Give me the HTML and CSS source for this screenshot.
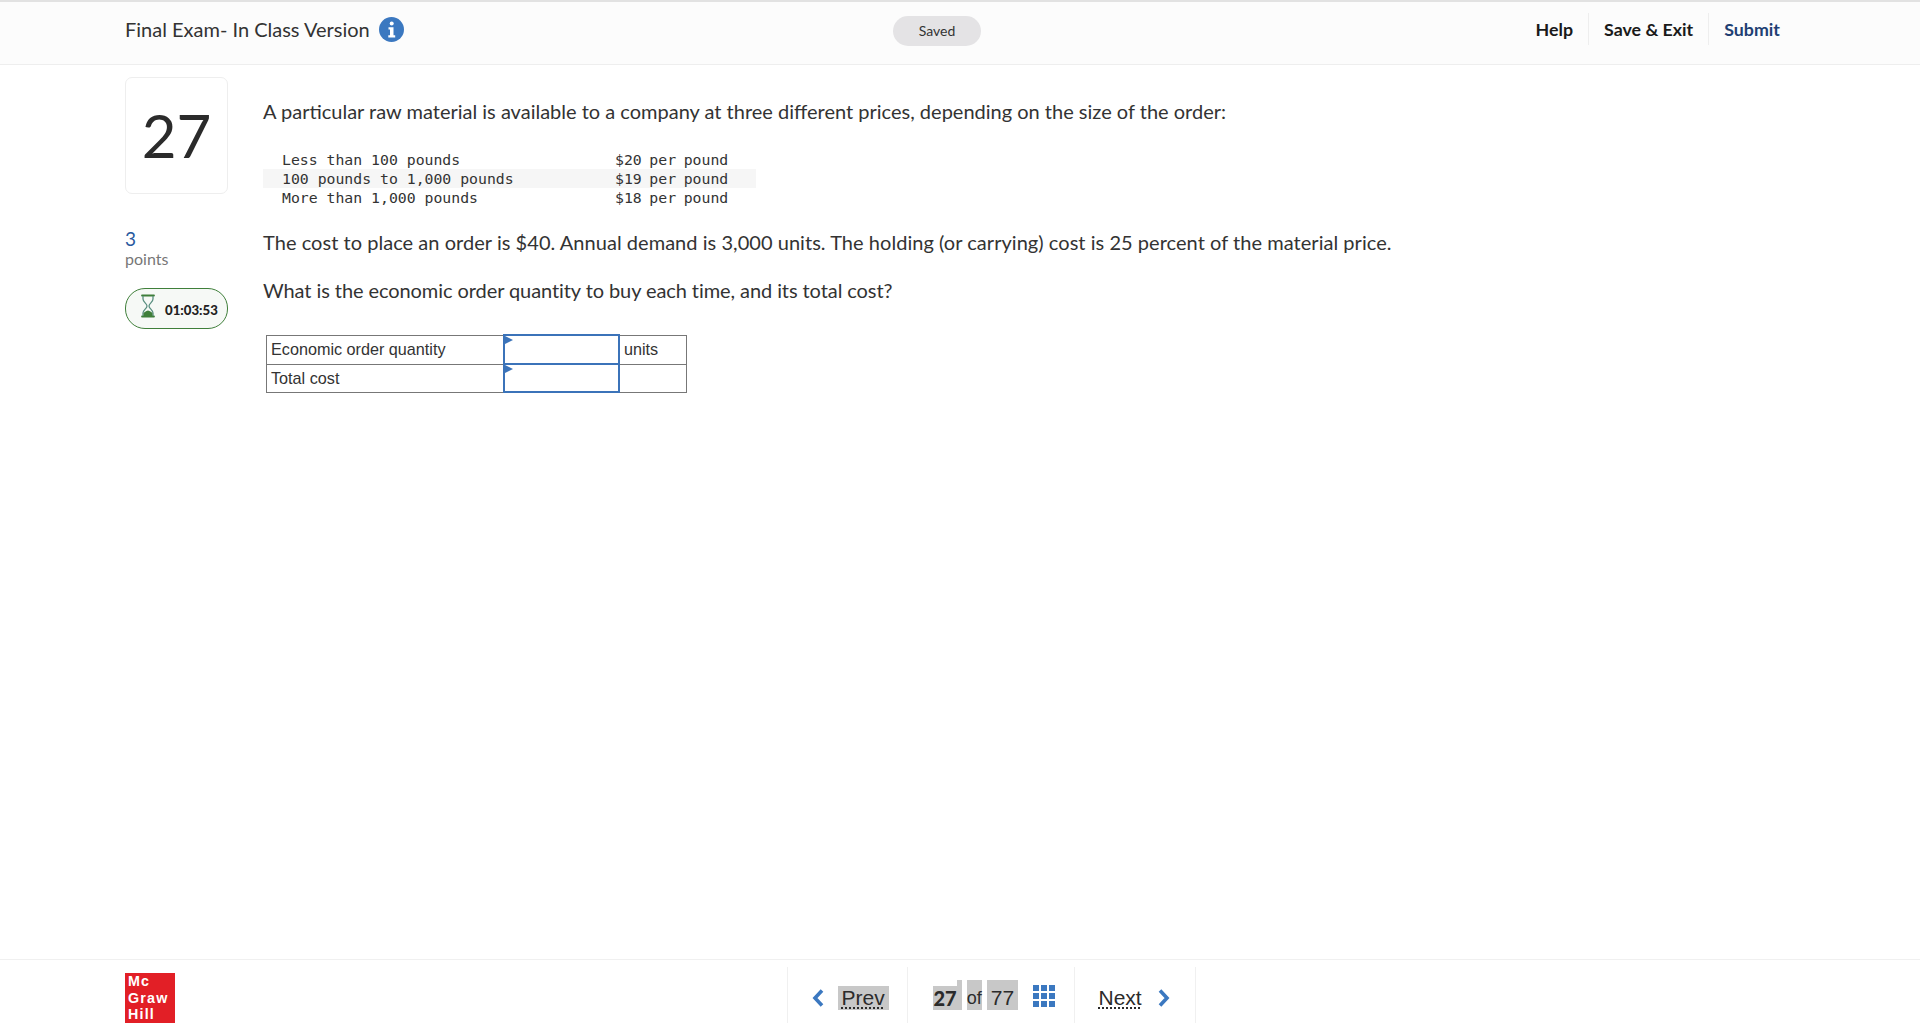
FILE: index.html
```html
<!DOCTYPE html>
<html lang="en">
<head>
    <meta charset="UTF-8">
    <meta name="viewport" content="width=device-width, initial-scale=1.0">
    <title>Final Exam- In Class Version</title>
    <link rel="stylesheet" href="styles.css">
</head>
<body>
    <header class="top-bar">
        <div class="exam-title">
            <span>Final Exam- In Class Version</span>
            <svg class="info-icon" width="25" height="25" viewBox="0 0 25 25">
                <circle cx="12.5" cy="12.5" r="12.5" fill="#3b78c0"/>
                <circle cx="12.7" cy="6.6" r="2" fill="#fff"/>
                <path d="M9.5 10.3h5v8h1.700v2.200H9.300v-2.200h1.700v-5.800H9.500z" fill="#fff"/>
            </svg>
        </div>
        <div class="saved-pill">Saved</div>
        <nav class="top-links">
            <a class="top-link">Help</a>
            <a class="top-link">Save &amp; Exit</a>
            <a class="top-link submit">Submit</a>
        </nav>
    </header>

    <main class="question-area">
        <aside class="side-col">
            <div class="question-number">27</div>
            <div class="points-value">3</div>
            <div class="points-label">points</div>
            <div class="timer">
                <svg width="16" height="24" viewBox="0 0 16 24">
                    <path d="M2 1.500h12M2 22.500h12" fill="none" stroke="#3f7f3a" stroke-width="1.800" stroke-linecap="round"/>
                    <path d="M3 2v3c0 3 4 4.500 4 7s-4 4-4 7v3M13 2v3c0 3-4 4.500-4 7s4 4 4 7v3" fill="none" stroke="#5a8f80" stroke-width="1.300"/>
                    <path d="M3.500 22v-2.500c.5-1.500 2.500-2.500 4.500-3 2 .5 4 1.500 4.500 3V22z" fill="#3f7f3a"/>
                </svg>
                <span>01:03:53</span>
            </div>
        </aside>

        <section class="question-body">
            <p class="first-line">A particular raw material is available to a company at three different prices, depending on the size of the order:</p>
            <div class="price-table">
                <div class="price-row"><span>Less than 100 pounds</span><span class="price">$20 per pound</span></div>
                <div class="price-row shaded"><span>100 pounds to 1,000 pounds</span><span class="price">$19 per pound</span></div>
                <div class="price-row"><span>More than 1,000 pounds</span><span class="price">$18 per pound</span></div>
            </div>
            <p class="cost-line">The cost to place an order is $40. Annual demand is 3,000 units. The holding (or carrying) cost is 25 percent of the material price.</p>
            <p class="ask-line">What is the economic order quantity to buy each time, and its total cost?</p>
            <table class="answer-table">
                <tr>
                    <td class="label-cell">Economic order quantity</td>
                    <td class="input-cell"><span class="marker"></span></td>
                    <td class="unit-cell">units</td>
                </tr>
                <tr>
                    <td class="label-cell">Total cost</td>
                    <td class="input-cell"><span class="marker"></span></td>
                    <td class="unit-cell"></td>
                </tr>
            </table>
        </section>
    </main>

    <footer class="bottom-bar">
        <div class="logo">
            <span>Mc</span>
            <span>Graw</span>
            <span>Hill</span>
        </div>
        <nav class="pager">
            <div class="pager-part prev-part">
                <svg width="12" height="18" viewBox="0 0 12 18"><path d="M10 1.500 3 9l7 7.500" fill="none" stroke="#3b78c0" stroke-width="3.600"/></svg>
                <a class="pager-word grey">Prev</a>
            </div>
            <div class="pager-part count-part">
                <span class="count-now">27</span>
                <span class="count-of">of</span>
                <span class="count-total">77</span>
                <svg class="grid-icon" width="23" height="22" viewBox="0 0 23 22">
                    <rect width="6" height="6" fill="#3b78c0"/><rect x="8" width="6" height="6" fill="#3b78c0"/><rect x="16" width="6" height="6" fill="#3b78c0"/>
                    <rect y="8" width="6" height="6" fill="#3b78c0"/><rect x="8" y="8" width="6" height="6" fill="#3b78c0"/><rect x="16" y="8" width="6" height="6" fill="#3b78c0"/>
                    <rect y="16" width="6" height="6" fill="#3b78c0"/><rect x="8" y="16" width="6" height="6" fill="#3b78c0"/><rect x="16" y="16" width="6" height="6" fill="#3b78c0"/>
                </svg>
            </div>
            <div class="pager-part next-part">
                <a class="pager-word">Next</a>
                <svg width="12" height="18" viewBox="0 0 12 18"><path d="M2 1.500 9 9l-7 7.500" fill="none" stroke="#3b78c0" stroke-width="3.600"/></svg>
            </div>
        </nav>
    </footer>
</body>
</html>
```

FILE: styles.css
```css
/* Page */
html, body {
    margin: 0;
    padding: 0;
    height: 100%;
}

body {
    display: flex;
    flex-direction: column;
    background-color: #fff;
    color: #333;
    font-family: Lato, "Noto Sans", sans-serif;
}

/* Top bar */
.top-bar {
    display: flex;
    align-items: center;
    box-sizing: border-box;
    height: 65px;
    padding: 0 140px 5px 125px;
    background-color: #fcfcfc;
    border-top: 2px solid #e2e2e2;
    border-bottom: 1px solid #eeeeee;
}

.exam-title {
    display: flex;
    align-items: center;
    gap: 9px;
    width: 768px;
    margin-bottom: 3px;
    font-size: 20px;
}

.saved-pill {
    width: 88px;
    height: 30px;
    line-height: 30px;
    text-align: center;
    font-size: 14px;
    background-color: #e4e3e5;
    border-radius: 15px;
}

.top-links {
    display: flex;
    align-items: center;
    margin-left: auto;
    margin-bottom: 3px;
}

.top-link {
    padding: 5px 15px;
    font-size: 17.800px;
    font-weight: 700;
    color: #1a1a1a;
    border-right: 1px solid #eeeeee;
}

.top-link.submit {
    padding-right: 0;
    color: #1f3f73;
    border-right: none;
}

/* Question */
.question-area {
    flex: 1;
    display: flex;
    gap: 35px;
    padding: 12px 0 0 125px;
}

.side-col {
    width: 103px;
}

.question-number {
    box-sizing: border-box;
    height: 117px;
    padding-bottom: 3px;
    line-height: 114px;
    text-align: center;
    font-size: 60px;
    color: #2b2b2b;
    border: 1px solid #eeeeee;
    border-radius: 7px;
}

.points-value {
    margin-top: 33px;
    font-size: 19px;
    line-height: 24px;
    color: #2a5a9f;
}

.points-label {
    margin-top: -2px;
    font-size: 16px;
    line-height: 20px;
    color: #777;
}

.timer {
    display: flex;
    align-items: center;
    gap: 9px;
    box-sizing: border-box;
    height: 41px;
    margin-top: 19px;
    padding: 3px 0 0 14px;
    font-size: 13.200px;
    font-weight: 900;
    color: #222;
    background-color: #f6f9f6;
    border: 1px solid #3f7f3a;
    border-radius: 20px;
}

.timer svg {
    margin-top: -8px;
}

.question-body {
    flex: 1;
    font-size: 20px;
}

.question-body p {
    margin: 0;
    line-height: 28px;
}

.first-line {
    padding-top: 20px;
}

.price-table {
    width: 493px;
    margin-top: 25px;
    font-family: "DejaVu Sans Mono", monospace;
    font-size: 14.800px;
}

.price-row {
    display: grid;
    grid-template-columns: 333px 1fr;
    height: 19px;
    line-height: 19px;
    padding-left: 19px;
}

.price-row.shaded {
    background-color: #f6f6f6;
}

.price {
    word-spacing: -1.300px;
}

.question-body .cost-line {
    margin-top: 21px;
    letter-spacing: 0.040px;
}

.question-body .ask-line {
    margin-top: 20px;
    letter-spacing: -0.080px;
}

/* Answer table */
.answer-table {
    margin: 30px 0 0 3px;
    border-collapse: collapse;
    font-family: "Liberation Sans", sans-serif;
    font-size: 16.200px;
}

.answer-table td {
    height: 28px;
    padding: 0 3px 0 4px;
    border: 1px solid #777;
}

.answer-table tr:last-child td {
    height: 27px;
}

.label-cell {
    width: 229px;
}

.unit-cell {
    width: 59px;
}

.answer-table .input-cell {
    position: relative;
    box-sizing: border-box;
    width: 115px;
    border: 2px solid #3b73b9;
}

.marker {
    position: absolute;
    top: 0;
    left: 0;
    border-top: 4px solid transparent;
    border-bottom: 4px solid transparent;
    border-left: 8px solid #3b73b9;
}

/* Bottom bar */
.bottom-bar {
    position: relative;
    display: flex;
    justify-content: center;
    box-sizing: border-box;
    height: 73px;
    padding-top: 7px;
    border-top: 1px solid #f0f0f0;
}

.logo {
    position: absolute;
    left: 125px;
    top: 13px;
    box-sizing: border-box;
    width: 50px;
    height: 50px;
    padding-left: 3px;
    background-color: #e21f26;
    color: #fff;
    font-family: "Liberation Sans", sans-serif;
    font-size: 14.300px;
    font-weight: 700;
    letter-spacing: 1.200px;
    line-height: 16.500px;
}

.logo span {
    display: block;
}

.pager {
    display: flex;
    height: 56px;
    margin-left: 62px;
    border-left: 1px solid #f0f0f0;
    border-right: 1px solid #f0f0f0;
    font-family: "Liberation Sans", sans-serif;
    font-size: 21px;
    color: #2b2b2b;
}

.pager-part {
    display: flex;
    align-items: center;
    padding-top: 6px;
    box-sizing: border-box;
}

.prev-part {
    width: 120px;
    gap: 14px;
    padding-left: 24px;
    border-right: 1px solid #f0f0f0;
}

.count-part {
    align-items: flex-end;
    width: 167px;
    padding: 0 0 13px 25px;
    border-right: 1px solid #f0f0f0;
}

.next-part {
    width: 120px;
    gap: 16px;
    padding-left: 24px;
}

.pager-word {
    line-height: 24px;
    text-decoration: underline dotted;
    text-underline-offset: 2px;
}

.pager-word.grey {
    padding: 0 4px;
    background-color: #c8c8c8;
}

.count-now {
    position: relative;
    padding: 0 5px 0 1px;
    line-height: 24px;
    font-family: Lato, sans-serif;
    font-size: 20px;
    font-weight: 900;
    background-color: #c8c8c8;
}

/* small grey step above the number */
.count-now::after {
    content: "";
    position: absolute;
    right: 0;
    top: -6px;
    width: 5px;
    height: 6px;
    background-color: #c8c8c8;
}

.count-of {
    margin-left: 5px;
    padding-top: 6px;
    line-height: 24px;
    font-size: 18px;
    background-color: #c8c8c8;
}

.count-total {
    margin-left: 5px;
    padding: 6px 4px 0;
    line-height: 24px;
    background-color: #c8c8c8;
}

.grid-icon {
    align-self: flex-start;
    margin: 18px 0 0 15px;
}
```
